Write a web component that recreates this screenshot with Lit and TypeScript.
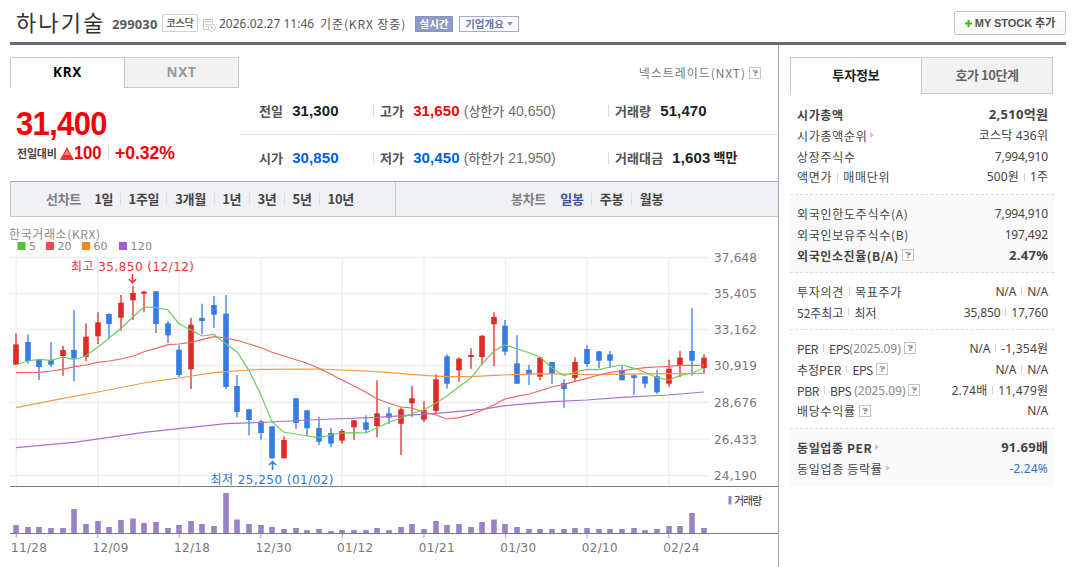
import { LitElement, html, svg, css, nothing } from "lit";
import { customElement, property } from "lit/decorators.js";
import { classMap } from "lit/directives/class-map.js";

type Candle = [high: number, top: number, bottom: number, low: number, dir: "u" | "d", volume: number];
type Point = [index: number, y: number];

const CANDLES: Candle[] = [
  [333.3, 344.3, 364.7, 364.7, "u", 8], [334.5, 342, 361, 363.7, "d", 6], [359.3, 360, 367, 380, "d", 6],
  [342, 360, 364.7, 367, "d", 5], [345.7, 350, 356, 375.7, "u", 5], [310.3, 350, 358.3, 381.3, "d", 24],
  [323.3, 336.7, 357, 361.3, "u", 9], [312.3, 322.3, 336.3, 344, "u", 12], [313.3, 314, 324, 338.3, "d", 6],
  [295, 302.7, 317.7, 330.7, "u", 13], [286, 293, 300.3, 320, "u", 14.5], [290.7, 291.7, 293.7, 312.3, "u", 10],
  [291.3, 291.3, 324, 333, "d", 11], [321, 323.3, 335.3, 343, "d", 5], [345.3, 349.7, 375, 377, "d", 8],
  [318, 324.7, 369.3, 389, "u", 12], [303.7, 318, 321, 334.3, "d", 9], [296, 305, 314.7, 327.7, "d", 7],
  [295, 313.7, 387, 389, "d", 40], [375, 386, 412, 417.3, "d", 13.5], [409, 409.3, 420, 435.3, "d", 9],
  [420, 421.3, 433, 439.7, "d", 8], [426.3, 426.3, 458.3, 458.3, "d", 6], [436.3, 440, 458.3, 458.3, "u", 4],
  [398, 398.3, 423, 428.7, "d", 5], [410.3, 410.3, 428.3, 436.3, "d", 3], [416.7, 428, 441.7, 445, "d", 4],
  [427.7, 433, 443.7, 447.3, "d", 2], [429, 431, 440.7, 443.7, "u", 3], [420, 420.3, 427.3, 439.7, "u", 3],
  [415.3, 422.3, 429.7, 433, "d", 3], [380.3, 413.3, 426, 437.3, "u", 5], [407, 413.3, 417.7, 424, "d", 3],
  [407.3, 409.3, 423.7, 455, "u", 6], [386, 398.3, 403.3, 416.7, "u", 9], [401.3, 410, 419.7, 421.7, "u", 4],
  [374.3, 379.3, 411, 414.3, "u", 12], [354.3, 356.3, 383.7, 388.7, "d", 8], [357.3, 358.7, 370.3, 381.7, "u", 9],
  [348.3, 355, 357, 368.7, "u", 6], [335.3, 335.7, 357, 365, "u", 11], [312.3, 317, 324.3, 366, "u", 13.5],
  [320, 325.7, 351.7, 355.3, "d", 9], [335.3, 363.3, 383.7, 383.7, "d", 6], [365, 369.7, 374.7, 385, "d", 4],
  [357, 357.7, 376.7, 380.3, "u", 4], [362, 362, 373.7, 383.7, "d", 4], [379.3, 383, 389, 407.7, "d", 4],
  [357.3, 362, 378, 381.3, "u", 5], [345.3, 349, 364, 367, "d", 5], [351, 351.3, 360.7, 368.3, "d", 4],
  [351, 354.3, 360.7, 368, "d", 4], [366, 370, 380.3, 380.3, "d", 4], [373.7, 375.3, 378, 394.7, "d", 5],
  [376, 376.3, 383.7, 388, "d", 3], [369.7, 376.3, 392.3, 393.7, "d", 4], [359.7, 368.7, 383.7, 386.7, "u", 7],
  [351, 357.7, 365, 377, "u", 7], [308, 351, 360.7, 375.7, "d", 20], [354.3, 357.7, 368, 373.7, "u", 5],
];

const MA5: Point[] = [364.7, 361, 359.3, 360.3, 357, 359.7, 355.7, 347, 338.3, 328.3, 316.7, 307, 307.7, 310, 323.7, 330,
  336, 334.3, 344, 352, 370.3, 395, 422, 432.3, 434, 436, 437.7, 435, 433, 432.7, 433, 427.7, 422.3, 418, 413.7, 409.7,
  403, 396, 386.7, 378, 364, 351, 345, 348.7, 352.7, 357, 368, 375.7, 372, 369.3, 369.7, 367, 365, 368.3, 372.3, 377.7,
  380, 375.7, 373, 367.7].map((y, i) => [i, y]);
const MA20: Point[] = [372.7, 372.5, 372.3, 371, 369.3, 366.7, 365, 362.3, 361, 359, 356, 351.7, 348.3, 344.7, 344, 342.3,
  339.7, 336.7, 338, 340.3, 344, 347.7, 352.3, 356, 359.7, 363.3, 368.3, 374.3, 380, 386, 392.3, 398.7, 403.3, 407, 408,
  412, 415, 419, 417.7, 414.7, 410.3, 404.7, 399, 396.3, 394, 390.7, 387, 384.3, 381.3, 378.3, 375, 372.3, 370.7, 369,
  367.7, 367, 366.3, 365.3, 365.3, 365.3].map((y, i) => [i, y]);
const MA60: Point[] = [[0, 407.7], [4, 398.3], [7, 392], [11, 383], [13, 379.3], [14, 378], [17, 372.7], [18, 371.7],
  [20, 370], [21, 369.3], [26, 369], [31, 371.7], [35, 375.3], [37, 376.7], [39, 376.6], [41, 375.3], [45, 373.7],
  [49, 374.7], [52, 374.2], [56, 373.7], [59, 373.3]];
const MA120: Point[] = [[0, 447.7], [5, 442.3], [8, 437.3], [11, 432.3], [14, 428.7], [18, 423.7], [21, 422.5],
  [25, 420], [31, 417.3], [36, 413.3], [40, 409.3], [42, 405.7], [46, 401.7], [49, 400], [52, 397.3], [56, 395], [59, 392]];

const PRICES: [string, number][] = [["37,648", 257.5], ["35,405", 293.5], ["33,162", 329.5], ["30,919", 365.5],
  ["28,676", 402.5], ["26,433", 439], ["24,190", 475.5]];
const DATES = ["11/28", "12/09", "12/18", "12/30", "01/12", "01/21", "01/30", "02/10", "02/24"];
const LEGEND: [string, number, number, string][] = [["5", 17.5, 7, "#56c13f"], ["20", 46, 14, "#f04a4a"],
  ["60", 82, 14, "#f6861a"], ["120", 119, 21.5, "#a05ccd"]];

const cx = (i: number) => Math.round(16 + i * 11.654);
const dateX = (i: number) => 16.2 + i * 81.55;

@customElement("candle-chart")
export class CandleChart extends LitElement {
  static styles = css`
    :host { display: block; height: 350px; }
    svg { display: block; }
    text { font-family: "DejaVu Sans", "Noto Sans CJK KR", sans-serif; font-size: 12px; fill: #777; }
    .grid { stroke: #efefef; stroke-width: 1.3; }
    .axis { stroke: #787c84; stroke-width: 1.2; }
    .u { stroke: #e02b25; fill: #e02b25; }
    .d { stroke: #367be6; fill: #367be6; }
    .wick { stroke-width: 1.3; }
    .body { stroke: none; }
    .vol { fill: #9b82c4; }
    .ma { fill: none; stroke-width: 1.2; }
    .ma5 { stroke: #6fcb5f; } .ma20 { stroke: #f26666; } .ma60 { stroke: #f99a42; } .ma120 { stroke: #a870d6; }
    .market { font-family: "Noto Sans CJK KR", sans-serif; font-size: 12px; fill: #8c8c8c; }
    .key { font-size: 11px; fill: #888; }
    .hi { fill: #f0313c; } .lo { fill: #2a78d8; }
    .arrow { fill: none; stroke-width: 1.5; }
    .arrow-hi { stroke: #ee2b33; } .arrow-lo { stroke: #2a78d8; }
    .volkey { font-family: "Noto Sans CJK KR", sans-serif; font-size: 11px; fill: #333; }
  `;

  private line(points: Point[], cls: string) {
    return svg`<polyline class="ma ${cls}" points=${points.map(([i, y]) => `${cx(i)},${y}`).join(" ")}></polyline>`;
  }

  render() {
    return html`<svg width="768" height="350" viewBox="10 217 768 350">
      ${PRICES.map(([, y]) => svg`<line class="grid" x1="10" x2="710" y1=${y} y2=${y}></line>`)}
      ${DATES.map((_, i) => svg`<line class="grid" x1=${dateX(i)} x2=${dateX(i)} y1="257" y2="486"></line>
        <line class="axis" x1=${dateX(i)} x2=${dateX(i)} y1="534" y2="538" opacity=".6"></line>`)}
      ${CANDLES.map(([h, t, b, l, dir, v], i) => svg`
        <line class="wick ${dir}" x1=${cx(i)} x2=${cx(i)} y1=${h} y2=${l}></line>
        <rect class="body ${dir}" x=${cx(i) - 2.8} y=${t} width="5.6" height=${b - t}></rect>
        <rect class="vol" x=${cx(i) - 2.8} y=${533 - v} width="5.6" height=${v}></rect>`)}
      ${this.line(MA120, "ma120")}${this.line(MA60, "ma60")}${this.line(MA20, "ma20")}${this.line(MA5, "ma5")}
      <line class="axis" x1="10" x2="778" y1="486.5" y2="486.5"></line>
      <line class="axis" x1="10" x2="778" y1="533.5" y2="533.5"></line>
      ${PRICES.map(([p, y]) => svg`<text x="714" y=${y + 4.5} textLength="43">${p}</text>`)}
      ${DATES.map((d, i) => svg`<text x=${dateX(i) - 5.3} y="551.5" textLength="36">${d}</text>`)}
      <text class="market" x="9" y="238.5" textLength="91">한국거래소(KRX)</text>
      ${LEGEND.map(([t, x, w, c]) => svg`<rect x=${x} y="242" width="8" height="8" fill=${c}></rect>
        <text class="key" x=${x + 11.5} y="250" textLength=${w}>${t}</text>`)}
      <text class="hi" x="71" y="271" textLength="123">최고 35,850 (12/12)</text>
      <path class="arrow arrow-hi" d="M132.5 274v8.5M129 279.3l3.5 3.5 3.5-3.5"></path>
      <text class="lo" x="210.5" y="483.5" textLength="123">최저 25,250 (01/02)</text>
      <path class="arrow arrow-lo" d="M272.5 470v-9M269 465l3.5-3.5 3.5 3.5"></path>
      <rect class="vol" x="728.5" y="496" width="3" height="8.5"></rect>
      <text class="volkey" x="734" y="504.5" textLength="28">거래량</text>
    </svg>`;
  }
}

@customElement("help-icon")
export class HelpIcon extends LitElement {
  static styles = css`
    :host { display: inline-block; width: 12px; height: 12px; flex: none; }
    svg { display: block; }
  `;
  render() {
    return html`<svg width="12" height="12" viewBox="0 0 12 12">
      <rect x=".5" y=".5" width="11" height="11" fill="#fff" stroke="#c4c4c4"></rect>
      <path d="M3.6 3.9h3.6q1 0 1 .9t-1 .9H6v.9M5.2 8.3h1.6" fill="none" stroke="#7d8ba0" stroke-width="1.4"></path>
    </svg>`;
  }
}

interface Row { label: string[]; value: string[]; bold?: boolean; help?: boolean; arrow?: boolean; note?: string; blue?: boolean; tight?: boolean }
const SECTIONS: { cls: string; rows: Row[] }[] = [
  { cls: "s1", rows: [
    { label: ["시가총액"], value: ["2,510억원"], bold: true },
    { label: ["시가총액순위"], value: ["코스닥 436위"], arrow: true },
    { label: ["상장주식수"], value: ["7,994,910"] },
    { label: ["액면가", "매매단위"], value: ["500원", "1주"] } ] },
  { cls: "s2 tint", rows: [
    { label: ["외국인한도주식수(A)"], value: ["7,994,910"] },
    { label: ["외국인보유주식수(B)"], value: ["197,492"] },
    { label: ["외국인소진율(B/A)"], value: ["2.47%"], bold: true, help: true } ] },
  { cls: "s3", rows: [
    { label: ["투자의견", "목표주가"], value: ["N/A", "N/A"] },
    { label: ["52주최고", "최저"], value: ["35,850", "17,760"], tight: true } ] },
  { cls: "s4", rows: [
    { label: ["PER", "EPS"], note: "(2025.09)", help: true, value: ["N/A", "-1,354원"] },
    { label: ["추정PER", "EPS"], help: true, value: ["N/A", "N/A"], tight: true },
    { label: ["PBR", "BPS"], note: " (2025.09)", help: true, value: ["2.74배", "11,479원"] },
    { label: ["배당수익률"], help: true, value: ["N/A"] } ] },
  { cls: "s5 tint", rows: [
    { label: ["동일업종 PER"], value: ["91.69배"], bold: true, arrow: true },
    { label: ["동일업종 등락률"], value: ["-2.24%"], arrow: true, blue: true } ] },
];

@customElement("info-panel")
export class InfoPanel extends LitElement {
  static styles = css`
    :host { display: block; width: 264px; color: #444; font: 12px/21px "Noto Sans", "Noto Sans CJK KR", sans-serif; }
    .tabs { display: grid; grid-template-columns: 131px 132px; height: 37px; box-sizing: border-box; }
    .tab { border: 1px solid #c9c9c9; border-bottom: 0; border-right: 0; text-align: center; font: bold 13px/34px "Noto Sans CJK KR", sans-serif; letter-spacing: -.1px; color: #222; }
    .tab.off { background: #f2f2f2; border: 1px solid #c9c9c9; color: #666; letter-spacing: -.45px; }
    section { box-sizing: border-box; padding: 0 6px 0 7px; border-bottom: 1px dashed #dcdcdc; }
    .tint { background: #fafafa; }
    .s1 { height: 101px; padding-top: 10px; }
    .s2 { height: 78px; padding-top: 8px; }
    .s3 { height: 57px; padding-top: 8px; }
    .s4 { height: 99px; padding-top: 8px; }
    .s5 { height: 56px; padding-top: 8px; border: 0; }
    .row { display: flex; justify-content: space-between; height: 20.8px; }
    .cell { display: flex; align-items: center; white-space: nowrap; }
    .name { font-family: "Noto Sans CJK KR", sans-serif; letter-spacing: .7px; }
    .tight .name { letter-spacing: 0; }
    .name.latin, .tight .name.latin { letter-spacing: -.4px; }
    .val { letter-spacing: -.15px; }
    .val.hangul { letter-spacing: .2px; margin-right: -.2px; }
    .bold { font-weight: bold; }
    .bold .name { letter-spacing: .6px; }
    .bold .val { font-size: 13px; letter-spacing: .3px; margin-right: -.3px; }
    .blue .val { color: #2b73d2; letter-spacing: .2px; }
    .bar { width: 1px; height: 8px; background: #d2d2d2; margin: 0 5px; }
    .note { color: #888; letter-spacing: -.05px; white-space: pre; }
    .arrow { width: 0; height: 0; margin-left: 3px; border: 3px solid transparent; border-left: 4px solid #c9c9c9; border-right: 0; }
    help-icon { margin-left: 3px; }
  `;
  private parts(items: string[], cls: string) {
    return items.map((t, i) => html`${i ? html`<span class="bar"></span>` : nothing}<span
      class=${classMap({ [cls]: true, latin: /^[A-Z]+$/.test(t), hangul: /[가-힣]/.test(t) })}>${t}</span>`);
  }
  render() {
    return html`
      <div class="tabs"><div class="tab">투자정보</div><div class="tab off">호가 10단계</div></div>
      ${SECTIONS.map((s) => html`<section class=${s.cls}>
        ${s.rows.map((r) => html`<div class=${classMap({ row: true, bold: !!r.bold, blue: !!r.blue, tight: !!r.tight })}>
          <div class="cell">${this.parts(r.label, "name")}${r.note ? html`<span class="note">${r.note}</span>` : nothing}
            ${r.help ? html`<help-icon></help-icon>` : nothing}${r.arrow ? html`<i class="arrow"></i>` : nothing}</div>
          <div class="cell">${this.parts(r.value, "val")}</div>
        </div>`)}
      </section>`)}`;
  }
}

interface Quote { label: string; num: string; tone?: string; extra?: [string, string]; unit?: string }
const QUOTES: Quote[] = [
  { label: "전일", num: "31,300" },
  { label: "고가", num: "31,650", tone: "red", extra: ["상한가", "40,650"] },
  { label: "거래량", num: "51,470" },
  { label: "시가", num: "30,850", tone: "blue" },
  { label: "저가", num: "30,450", tone: "blue", extra: ["하한가", "21,950"] },
  { label: "거래대금", num: "1,603", unit: "백만" },
];
const LINE_RANGES: [string, number][] = [["1일", 18], ["1주일", 30], ["3개월", 31], ["1년", 19], ["3년", 19], ["5년", 19], ["10년", 26]];
const CANDLE_RANGES: [string, number][] = [["일봉", 22], ["주봉", 23], ["월봉", 23]];

@customElement("app-root")
export class AppRoot extends LitElement {
  @property() range = "일봉";

  static styles = css`
    :host { display: block; width: 1073px; height: 567px; overflow: hidden; background: #fff; color: #333; font-family: "Noto Sans", "Noto Sans CJK KR", sans-serif; white-space: nowrap; }
    header { display: flex; align-items: flex-start; height: 42px; margin: 0 7px 0 10px; border-bottom: 3px solid #666d79; }
    .title { width: 96px; margin: 6px 0 0 6px; font: 22px/30px "Noto Sans CJK KR", sans-serif; letter-spacing: 2.1px; }
    .code { width: 50px; margin-top: 15px; font: bold 13px/18px "Noto Sans", sans-serif; letter-spacing: .15px; color: #5a5a5a; }
    .badge { box-sizing: border-box; width: 36px; height: 18px; margin: 14px 0 0; border: 1px solid #d2d2d2; text-align: center; font: bold 10px/15px "Noto Sans CJK KR", sans-serif; letter-spacing: -.2px; color: #666; }
    .note-icon { margin: 19px 0 0 5px; width: 13px; height: 13px; }
    .date { width: 101px; margin: 15px 0 0 3px; font-size: 12px; line-height: 18px; letter-spacing: 0; color: #555; }
    .basis { width: 95px; margin-top: 15px; font: 12px/18px "Noto Sans CJK KR", sans-serif; letter-spacing: .9px; color: #555; }
    .live, .about { box-sizing: border-box; height: 16px; margin-top: 16px; font: bold 10.5px/14px "Noto Sans CJK KR", sans-serif; text-align: center; border: 1px solid #8793bf; }
    .live { width: 38px; background: #8f9bc7; color: #fff; }
    .about { display: flex; align-items: center; justify-content: center; gap: 3px; width: 60px; margin-left: 6px; color: #6475b0; border-color: #a3adcf; background: #fbfcff; }
    .caret { border: 3px solid transparent; border-top: 4px solid #8d99c4; border-bottom: 0; }
    .mystock { box-sizing: border-box; display: flex; align-items: center; justify-content: center; gap: 3px; width: 112px; height: 24px; margin: 11px 0 0 auto; border: 1px solid #c4c4c4; border-radius: 2px; background: linear-gradient(#fff, #f8f8f8); font: bold 11px/20px "Liberation Sans", "Noto Sans CJK KR", sans-serif; letter-spacing: -.05px; color: #505050; }

    .body { display: flex; }
    .main { box-sizing: border-box; width: 769px; height: 522px; margin-left: 10px; padding-top: 12px; border-right: 1px solid #a6a9b0; }
    info-panel { margin: 12px 0 0 11px; }
    .top { display: flex; height: 31px; }
    .tab { box-sizing: border-box; width: 115px; height: 31px; border: 1px solid #c8c8c8; border-bottom: 0; text-align: center; font: bold 13.5px/29px "Noto Sans", sans-serif; color: #000; letter-spacing: .7px; }
    .tab.off { width: 115px; margin-left: -1px; border-bottom: 1px solid #c8c8c8; background: #f2f2f2; color: #999; }
    .nxt { display: flex; align-items: center; gap: 3px; margin: 0 17px 0 auto; font: 12px/31px "Noto Sans CJK KR", sans-serif; letter-spacing: .95px; color: #777; }
    .summary { display: flex; height: 93px; }
    .price { width: 229px; color: #f50008; font-family: "Liberation Sans", sans-serif; font-weight: bold; }
    .now { width: 104px; height: 34px; margin: 18px 0 0 6px; font-size: 34px; line-height: 34px; letter-spacing: -.7px; transform: scaleX(.91); transform-origin: 0 0; }
    .delta { display: flex; align-items: center; height: 20px; margin: 3px 0 0 7px; font-size: 19px; }
    .vs { width: 42px; margin-right: 1px; font: bold 11px/20px "Noto Sans CJK KR", sans-serif; letter-spacing: -.2px; color: #444; }
    .tri { width: 14px; height: 13px; }
    .diff { width: 34px; transform: scaleX(.88); transform-origin: 0 0; letter-spacing: -.2px; }
    .bar { width: 1px; height: 12px; background: #ddd; }
    .pct { margin-left: 6px; transform: scaleX(.93); transform-origin: 0 0; letter-spacing: -.1px; }
    .quotes { display: grid; grid-template-columns: 134px 235px 170px; grid-template-rows: 47px 46px; width: 539px; font: bold 15px/44px "Liberation Sans", "Noto Sans CJK KR", sans-serif; letter-spacing: .12px; color: #222; }
    .q { display: flex; align-items: center; }
    .q.upper { padding-bottom: 1px; border-bottom: 1px solid #e6e6e6; }
    .q.first { padding-left: 20px; }
    .q .bar { margin-right: 6px; }
    .ql { margin-right: 9px; font: bold 13px/20px "Noto Sans CJK KR", sans-serif; letter-spacing: .1px; color: #555; }
    .red { color: #f50008; } .blue { color: #0060e0; }
    .extra { margin-left: 4px; font-size: 14px; font-weight: normal; letter-spacing: 0; color: #707070; }
    .extra .k { font: 500 13px/20px "Noto Sans CJK KR", sans-serif; }
    .unit { margin-left: 3px; font-size: 13px; }
    nav { box-sizing: border-box; display: flex; height: 36px; border: 1px solid #c3c5ca; border-top-color: #a6a9b0; border-right: 0; background: #f0f1f5; font: bold 13px/34px "Noto Sans CJK KR", sans-serif; letter-spacing: -.3px; color: #444; }
    .group { display: flex; align-items: center; gap: 7.7px; padding-left: 35px; }
    .group.lines { box-sizing: border-box; width: 385px; border-right: 1px solid #c3c5ca; }
    .group.candles { padding-left: 115px; gap: 8px; }
    .head { width: 35px; margin-right: 6px; color: #808080; }
    .candles .head { margin-right: 7px; }
    .item { display: flex; justify-content: center; }
    .item.on { color: #3a4fa0; }
    .group .bar { background: #dcdde2; }
    .lines .bar { margin-left: -.2px; }
  `;

  private group(title: string, items: [string, number][], cls: string) {
    return html`<div class="group ${cls}"><span class="head">${title}</span>
      ${items.map(([t, w], i) => html`${i ? html`<span class="bar"></span>` : nothing}<span
        class=${classMap({ item: true, on: t === this.range })} style="width:${w}px">${t}</span>`)}</div>`;
  }

  render() {
    return html`
      <header>
        <span class="title">하나기술</span><span class="code">299030</span><span class="badge">코스닥</span>
        <svg class="note-icon" viewBox="0 0 13 13" fill="none" stroke="#c6c6c6">
          <path d="M.5 .5h9v4M.5 .5v10h4.5M1 2.5h8M2.5 5.5h3M2.5 7.5h2"></path><circle cx="8.8" cy="8.8" r="3.6"></circle><path d="M8.5 6.8v2.4h2"></path>
        </svg>
        <span class="date">2026.02.27 11:46</span><span class="basis">기준(KRX 장중)</span>
        <span class="live">실시간</span><span class="about">기업개요<i class="caret"></i></span>
        <span class="mystock"><svg width="7" height="7" viewBox="0 0 7 7"><path d="M3.5 0v7M0 3.5h7" stroke="#3fb31c" stroke-width="2"></path></svg>MY STOCK 추가</span>
      </header>
      <div class="body">
        <div class="main">
          <div class="top">
            <span class="tab">KRX</span><span class="tab off">NXT</span>
            <span class="nxt">넥스트레이드(NXT)<help-icon></help-icon></span>
          </div>
          <div class="summary">
            <div class="price">
              <div class="now">31,400</div>
              <div class="delta"><span class="vs">전일대비</span>
                <svg class="tri" viewBox="0 0 14 13"><path d="M7 0l7 13H0z" fill="#e8352f"></path><path d="M7 2l3 6H4z" fill="#f27a70"></path></svg>
                <span class="diff">100</span><span class="bar"></span><span class="pct">+0.32%</span></div>
            </div>
            <div class="quotes">
              ${QUOTES.map((q, i) => html`<div class=${classMap({ q: true, upper: i < 3, first: i % 3 === 0 })}>
                ${i % 3 ? html`<span class="bar"></span>` : nothing}<span class="ql">${q.label}</span><span class=${q.tone ?? ""}>${q.num}</span>
                ${q.extra ? html`<span class="extra">(<span class="k">${q.extra[0]}</span> ${q.extra[1]})</span>` : nothing}
                ${q.unit ? html`<span class="unit">${q.unit}</span>` : nothing}
              </div>`)}
            </div>
          </div>
          <nav>${this.group("선차트", LINE_RANGES, "lines")}${this.group("봉차트", CANDLE_RANGES, "candles")}</nav>
          <candle-chart></candle-chart>
        </div>
        <info-panel></info-panel>
      </div>`;
  }
}
